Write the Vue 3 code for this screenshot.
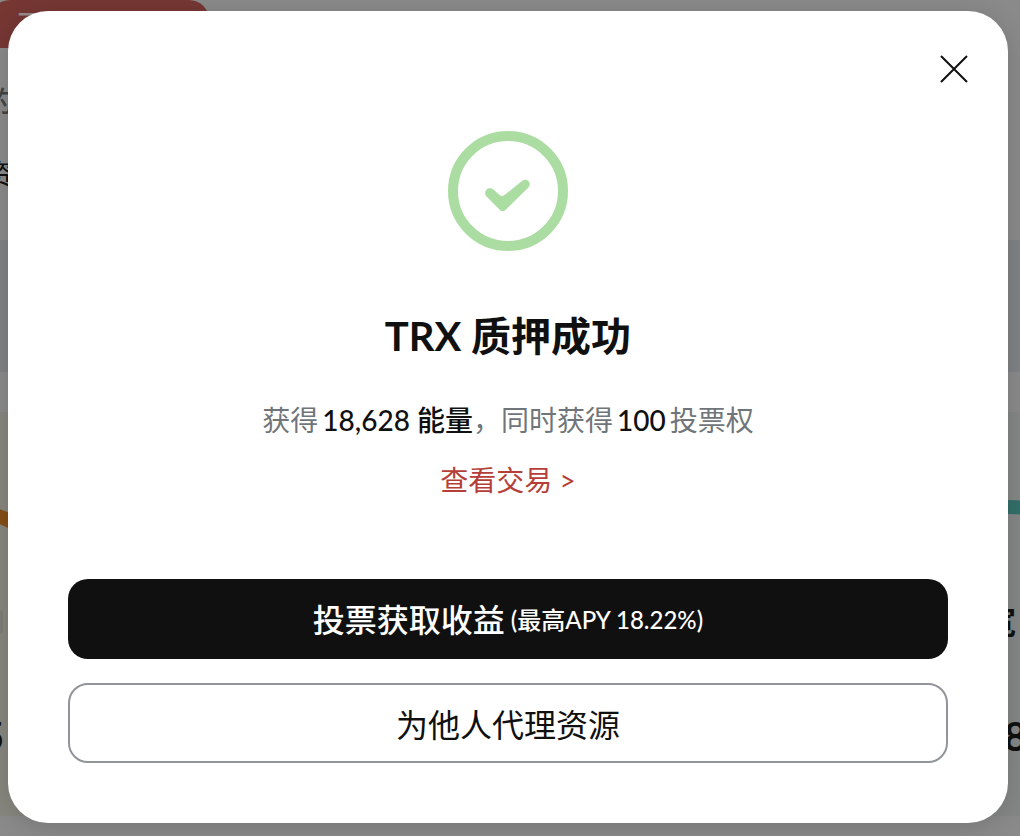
<script setup>
const reward = { energy: '18,628', votes: '100', apy: '18.22%' }
</script>

<template>
  <div class="screen">
    <div class="page" aria-hidden="true">
      <div class="side">
        <div class="tab">下</div>
        <div class="line muted">的</div>
        <div class="line dark">资</div>
        <div class="band"></div>
        <div class="card warm">
          <svg class="arc" width="30" height="120" viewBox="0 0 30 120">
            <path d="M-10 102Q10 106 30 122" fill="none" stroke="#854d17" stroke-width="14" />
          </svg>
          <div class="chip"></div>
          <div class="amount">5</div>
        </div>
      </div>
      <div class="side right">
        <div class="band"></div>
        <div class="card cool">
          <svg class="arc" width="30" height="120" viewBox="0 0 30 120">
            <path d="M0 95Q16 95 30 98" fill="none" stroke="#346f69" stroke-width="14" />
          </svg>
          <div class="label">宽</div>
          <div class="amount">8</div>
        </div>
      </div>
    </div>

    <main class="modal" role="dialog" aria-labelledby="title">
      <button class="close" type="button" aria-label="关闭">
        <svg width="28" height="28" viewBox="0 0 28 28">
          <path d="M1 1L27 27M27 1L1 27" fill="none" stroke="#101010" stroke-width="2" />
        </svg>
      </button>
      <svg class="success" width="120" height="120" viewBox="0 0 120 120" aria-hidden="true">
        <circle cx="60" cy="60" r="55" fill="none" stroke="#abdda2" stroke-width="10" />
        <path
          d="M38.8 65.8C36.6 63.5 36.6 60.6 38.5 58.8C40.4 56.9 43.3 56.8 45.4 58.6L51.5 64C53.3 65.4 55.2 65.3 57.2 63.6L74 50C76 48.4 78.6 48.4 80.3 50C82.3 51.8 82.1 54.7 80.2 56.7L58 78.4C56 80.4 53.4 80.4 51.4 78.4Z"
          fill="#abdda2"
        />
      </svg>
      <h1 id="title">TRX 质押成功</h1>
      <p class="summary">
        <span>获得</span>
        <span><strong>{{ reward.energy }} 能量</strong>，同时获得</span>
        <strong>{{ reward.votes }}</strong>
        <span>投票权</span>
      </p>
      <a class="link" href="#">查看交易 &gt;</a>
      <div class="actions">
        <button class="primary" type="button">
          <span>投票获取收益</span>
          <small>(最高APY {{ reward.apy }})</small>
        </button>
        <button class="secondary" type="button">为他人代理资源</button>
      </div>
    </main>
  </div>
</template>

<style>
body {
  margin: 0;
  background: #8a8a8a;
}
</style>

<style scoped>
.screen {
  position: relative;
  box-sizing: border-box;
  min-height: 100vh;
  padding: 11px 12px 13px 8px;
  overflow: hidden;
  font-family: Lato, "Noto Sans CJK SC", sans-serif;
  color: #101010;
}
.page {
  position: absolute;
  inset: 0;
  display: flex;
  overflow: hidden;
  background: #8a8a8a;
}
.side {
  flex: 1;
}
.tab {
  box-sizing: border-box;
  width: 219px;
  height: 48px;
  margin-left: -10px;
  padding-left: 27px;
  border-radius: 20px 20px 0 0;
  background: #763733;
  color: #9a8a89;
  font-size: 32px;
  line-height: 52px;
}
.line {
  height: 40px;
  margin-left: -15px;
  font-size: 28px;
  line-height: 40px;
}
.muted {
  margin-top: 33px;
  color: #414344;
  font-weight: 500;
}
.dark {
  margin-top: 33px;
  margin-bottom: 46px;
  color: #101010;
}
.band {
  height: 132px;
  background: #7f8284;
}
.card {
  box-sizing: border-box;
  height: 404px;
  margin-top: 40px;
}
.warm {
  background: #87867e;
}
.cool {
  background: #848785;
}
.right {
  display: flex;
  flex-direction: column;
  padding-top: 240px;
}
.arc {
  display: block;
}
.right .arc {
  margin-left: auto;
  margin-right: -18px;
}
.chip {
  width: 3px;
  height: 24px;
  margin-top: 78px;
  border-radius: 0 6px 6px 0;
  background: #7e7d77;
}
.label {
  height: 40px;
  margin-top: 70px;
  margin-right: 4px;
  text-align: right;
  font-size: 32px;
  font-weight: 700;
  line-height: 40px;
}
.amount {
  height: 48px;
  font-size: 40px;
  font-weight: 700;
  line-height: 48px;
}
.warm .amount {
  margin-top: 78px;
  margin-left: -19px;
}
.cool .amount {
  margin-top: 70px;
  margin-right: -7px;
  text-align: right;
}
.modal {
  position: relative;
  box-sizing: border-box;
  display: flex;
  flex-direction: column;
  align-items: center;
  padding: 120px 60px 60px;
  border-radius: 40px;
  background: #fff;
  box-shadow: 0 4px 24px rgba(0, 0, 0, 0.15);
}
button {
  padding: 0;
  border: 0;
  font-family: inherit;
  cursor: pointer;
}
.close {
  position: absolute;
  top: 44px;
  right: 40px;
  background: none;
}
.close svg,
.success {
  display: block;
}
h1 {
  margin: 61px 0 0;
  font-size: 40px;
  font-weight: 700;
  line-height: 48px;
}
.summary {
  display: flex;
  flex-wrap: wrap;
  justify-content: center;
  gap: 0 4px;
  margin: 40px 0 0;
  color: #707579;
  font-size: 28px;
  line-height: 40px;
}
.summary strong {
  color: #101010;
  font-weight: 500;
}
.link {
  margin-top: 20px;
  color: #b53f38;
  font-size: 28px;
  line-height: 40px;
  text-decoration: none;
}
.actions {
  display: grid;
  gap: 24px;
  width: 100%;
  margin-top: 79px;
}
.actions button {
  box-sizing: border-box;
  height: 80px;
  border-radius: 20px;
  font-size: 32px;
}
.actions .primary {
  display: flex;
  align-items: center;
  justify-content: center;
  gap: 6px;
  padding-bottom: 2px;
  background: #101010;
  color: #fff;
  font-weight: 500;
}
.primary small {
  font-size: 24px;
}
.actions .secondary {
  border: 2px solid #919599;
  background: #fff;
  color: #101010;
}
</style>
